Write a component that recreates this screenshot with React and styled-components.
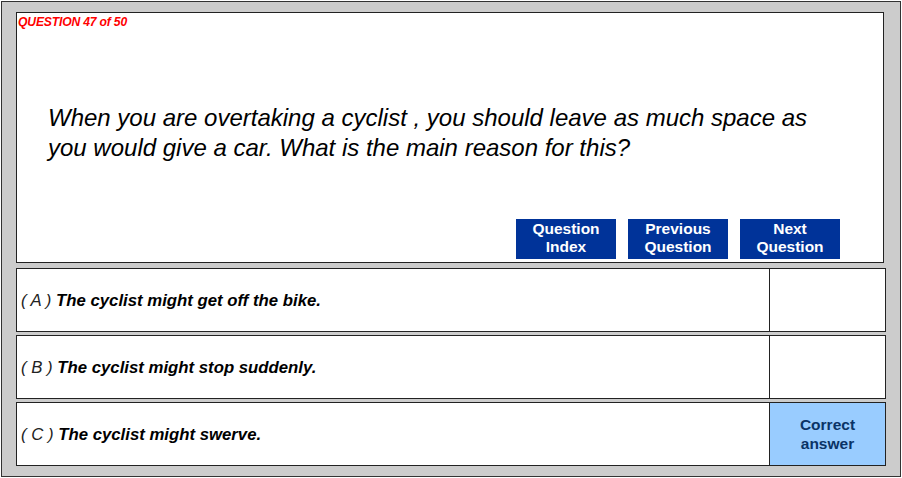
import React from 'react'
import styled, { createGlobalStyle } from 'styled-components'

const GlobalStyle = createGlobalStyle`
  html, body {
    margin: 0;
    padding: 0;
    background: #ffffff;
  }
  body {
    font-family: 'Liberation Sans', Arial, sans-serif;
  }
`

const Frame = styled.div`
  box-sizing: border-box;
  width: 900px;
  height: 476px;
  margin: 1px;
  padding: 10px 14px;
  border: 1px solid #333;
  background: #cccccc;
  display: flex;
  flex-direction: column;
`

const QuestionPanel = styled.div`
  box-sizing: border-box;
  height: 251px;
  margin-right: 2px;
  border: 1px solid #222;
  background: #fff;
  display: flex;
  flex-direction: column;
`

const Counter = styled.div`
  padding: 2px 0 0 1px;
  font-size: 12.2px;
  line-height: 14px;
  font-weight: bold;
  font-style: italic;
  color: #ff0000;
  letter-spacing: -0.2px;
`

const QuestionText = styled.p`
  margin: 74px 0 0 31px;
  max-width: 790px;
  font-size: 24px;
  line-height: 30px;
  font-style: italic;
  color: #000;
`

const NavRow = styled.div`
  margin-top: auto;
  padding: 0 43px 3px 0;
  display: flex;
  justify-content: flex-end;
  gap: 12px;
`

const NavButton = styled.button`
  box-sizing: border-box;
  width: 100px;
  height: 40px;
  padding: 0 0 2px;
  border: none;
  background: #003399;
  color: #fff;
  font-family: 'Liberation Sans', Arial, sans-serif;
  font-size: 15.5px;
  line-height: 18px;
  font-weight: bold;
  cursor: pointer;
`

const Answers = styled.div`
  margin-top: 5px;
  display: flex;
  flex-direction: column;
  gap: 3px;
`

const AnswerRow = styled.div`
  box-sizing: border-box;
  height: 64px;
  border: 1px solid #222;
  background: #fff;
  display: grid;
  grid-template-columns: 1fr 116px;
`

const AnswerText = styled.div`
  display: flex;
  align-items: center;
  padding: 1px 0 0 4px;
  font-size: 16.75px;
  font-style: italic;
  color: #000;
`

const Letter = styled.span`
  font-weight: normal;
  color: #222;
  white-space: pre;
`

const Option = styled.span`
  font-weight: bold;
`

const ResultCell = styled.div`
  border-left: 1px solid #222;
  background: ${p => (p.$correct ? '#99ccff' : '#fff')};
  display: flex;
  align-items: center;
  justify-content: center;
  text-align: center;
  font-size: 15.5px;
  line-height: 19px;
  font-weight: bold;
  color: #0a3366;
`

const answers = [
  { letter: 'A', text: 'The cyclist might get off the bike.' },
  { letter: 'B', text: 'The cyclist might stop suddenly.' },
  { letter: 'C', text: 'The cyclist might swerve.', correct: true },
]

const App = () => {
  return (
    <>
      <GlobalStyle />
      <Frame>
        <QuestionPanel>
          <Counter>QUESTION 47 of 50</Counter>
          <QuestionText>
            When you are overtaking a cyclist , you should leave as much space
            as you would give a car. What is the main reason for this?
          </QuestionText>
          <NavRow>
            <NavButton>Question<br />Index</NavButton>
            <NavButton>Previous<br />Question</NavButton>
            <NavButton>Next<br />Question</NavButton>
          </NavRow>
        </QuestionPanel>
        <Answers>
          {answers.map(a => (
            <AnswerRow key={a.letter}>
              <AnswerText>
                <Letter>{`( ${a.letter} ) `}</Letter>
                <Option>{a.text}</Option>
              </AnswerText>
              <ResultCell $correct={a.correct}>
                {a.correct && (
                  <span>Correct<br />answer</span>
                )}
              </ResultCell>
            </AnswerRow>
          ))}
        </Answers>
      </Frame>
    </>
  )
}

export default App
